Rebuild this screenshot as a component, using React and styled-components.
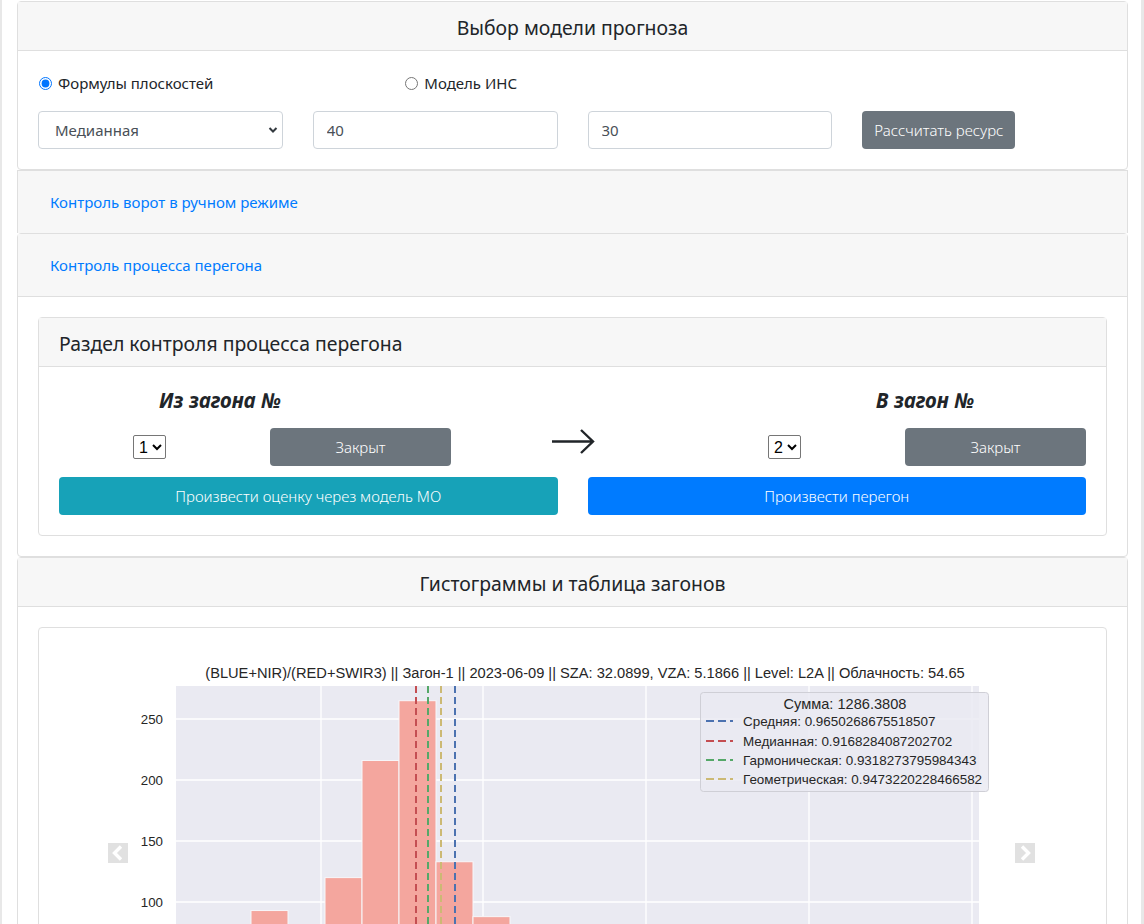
import React from 'react';
import styled, { createGlobalStyle } from 'styled-components';

const GlobalStyle = createGlobalStyle`
  * { box-sizing: border-box; }
  html, body {
    margin: 0;
    padding: 0;
    background: #fff;
    overflow: hidden;
  }
  body {
    font-family: "Noto Sans", "Open Sans", sans-serif;
    font-size: 15px;
    color: #212529;
  }
`;

/* Styled Components */
const Page = styled.div`
  width: 1144px;
  min-height: 924px;
  border-left: 2px solid #e8e8e8;
  border-right: 3px solid #e8e8e8;
  padding: 1px 13px 0 15px;
`;

const Card = styled.div`
  border: 1px solid #dfdfdf;
  border-bottom: ${(p) => (p.$collapsed ? 'none' : '1px solid #dfdfdf')};
  border-radius: ${(p) => (p.$collapsed ? '0' : '4px')};
  background: #fff;
`;

const CardHeader = styled.div`
  background: #f7f7f7;
  padding: 12px 20px;
  border-bottom: ${(p) => (p.$noLine ? 'none' : '1px solid #dfdfdf')};
  text-align: ${(p) => (p.$center ? 'center' : 'left')};
`;

const HeaderTitle = styled.h5`
  margin: 0 0 -2px;
  padding-top: 2px;
  font-size: 19.4px;
  font-weight: 400;
  line-height: 24px;
`;

const LinkButton = styled.button`
  font-family: inherit;
  font-size: 15px;
  color: #007bff;
  background: none;
  border: none;
  padding: 0 12px;
  height: 38px;
  line-height: 38px;
  cursor: pointer;
`;

const CardBody = styled.div`
  padding: 20px;
`;

const RadioRow = styled.div`
  display: grid;
  grid-template-columns: repeat(3, 1fr);
  column-gap: 30px;
  height: 24px;
  margin-bottom: 16px;
`;

const RadioLabel = styled.label`
  display: flex;
  align-items: center;
  font-size: 15px;
  line-height: 24px;

  input {
    width: 13px;
    height: 13px;
    margin: 0 6px 0 1px;
    accent-color: #0075ff;
  }
`;

const FormRow = styled.div`
  display: grid;
  grid-template-columns: repeat(4, 1fr);
  column-gap: 30px;
  align-items: center;
`;

const SelectWrap = styled.div`
  position: relative;

  svg {
    position: absolute;
    right: 5px;
    top: 15px;
    pointer-events: none;
  }
`;

const Select = styled.select`
  appearance: none;
  width: 100%;
  height: 38px;
  padding: 0 28px 0 16px;
  font-family: inherit;
  font-size: 15px;
  color: #495057;
  background: #fff;
  border: 1px solid #ced4da;
  border-radius: 4px;
`;

const Input = styled.input`
  width: 100%;
  height: 38px;
  padding: 0 13px;
  font-family: inherit;
  font-size: 15px;
  color: #495057;
  border: 1px solid #ced4da;
  border-radius: 4px;
`;

const Button = styled.button`
  height: 38px;
  padding: 0 12px;
  font-family: inherit;
  font-size: 15px;
  font-weight: 300;
  color: #fff;
  background: ${(p) => p.$bg || '#6c757d'};
  border: none;
  border-radius: 4px;
  cursor: pointer;
  width: ${(p) => (p.$block ? '100%' : 'auto')};
  justify-self: start;
`;

const InnerCard = styled.div`
  border: 1px solid #dfdfdf;
  border-radius: 4px;
`;

const TransferGrid = styled.div`
  display: grid;
  grid-template-columns: 1fr 30px 1fr;
`;

const PenTitle = styled.div`
  grid-column: ${(p) => (p.$right ? 3 : 1)};
  width: 322px;
  justify-self: ${(p) => (p.$right ? 'end' : 'start')};
  text-align: center;
  font-size: 20.5px;
  font-weight: 700;
  font-style: italic;
  line-height: 26px;
`;

const Controls = styled.div`
  grid-column: ${(p) => (p.$right ? 3 : 1)};
  justify-self: ${(p) => (p.$right ? 'end' : 'start')};
  display: grid;
  grid-template-columns: 181px 181px;
  column-gap: 30px;
  align-items: center;
  justify-items: center;
  margin-top: 15px;

  ${Button} {
    width: 100%;
  }
`;

const PenSelect = styled.select`
  height: 24px;
  font-family: "Liberation Sans", Arial, sans-serif;
  font-size: 16px;
  color: #000;
  border: 1px solid #767676;
  border-radius: 2px;
  background: #fff;
  padding: 0 1px;
`;

const ArrowCell = styled.div`
  grid-column: 2;
  justify-self: center;
  align-self: start;
  margin-top: 15px;
  width: 44px;
  display: flex;
  justify-content: center;
`;

const WideCell = styled.div`
  grid-column: ${(p) => (p.$right ? 3 : 1)};
  margin-top: 11px;
`;

const Carousel = styled.div`
  position: relative;
  height: 300px;
  overflow: hidden;
`;

const CarouselControl = styled.span`
  position: absolute;
  top: 195px;
  left: ${(p) => (p.$next ? '956px' : '49px')};
  width: 20px;
  height: 20px;
  display: block;
`;

const ChevronDown = () => (
  <svg width="10" height="8" viewBox="0 0 10 8">
    <path d="M1.5 2 L5 5.5 L8.5 2" fill="none" stroke="#343a40" strokeWidth="2" />
  </svg>
);

const Arrow = () => (
  <svg width="44" height="28" viewBox="0 0 44 28">
    <path d="M1 13.5 H42 M30 2 L42 13.5 L30 25" fill="none" stroke="#212529" strokeWidth="2.4" />
  </svg>
);

const CarouselIcon = ({ next }) => (
  <svg width="20" height="20" viewBox="0 0 20 20">
    <rect width="20" height="20" fill="#e1e1e1" />
    <path
      d={next ? 'M7 3.5 L13.5 10 L7 16.5' : 'M13 3.5 L6.5 10 L13 16.5'}
      fill="none"
      stroke="#fff"
      strokeWidth="3.4"
    />
  </svg>
);

const bars = [
  { x: 214, v: 40 },
  { x: 251, v: 93 },
  { x: 288, v: 55 },
  { x: 325, v: 120 },
  { x: 362, v: 216 },
  { x: 399, v: 265 },
  { x: 436, v: 133 },
  { x: 473, v: 88 },
  { x: 510, v: 42 },
  { x: 547, v: 20 },
];

const means = [
  { x: 416, color: '#c44e52' },
  { x: 428, color: '#55a868' },
  { x: 441, color: '#ccb974' },
  { x: 455, color: '#4c72b0' },
];

const legend = [
  { label: 'Средняя: 0.9650268675518507', color: '#4c72b0', y: 721 },
  { label: 'Медианная: 0.9168284087202702', color: '#c44e52', y: 741 },
  { label: 'Гармоническая: 0.9318273795984343', color: '#55a868', y: 760 },
  { label: 'Геометрическая: 0.9473220228466582', color: '#ccb974', y: 779 },
];

const yOf = (v) => 1024 - v * 1.22;

const Histogram = () => (
  <svg width="1026" height="300" viewBox="59 648 1026 300" fontFamily="'Liberation Sans', Arial, sans-serif">
    <text x="585" y="678" textAnchor="middle" fontSize="14.65" fill="#262626">
      (BLUE+NIR)/(RED+SWIR3) || Загон-1 || 2023-06-09 || SZA: 32.0899, VZA: 5.1866 || Level: L2A || Облачность: 54.65
    </text>
    <rect x="176" y="686" width="803" height="300" fill="#eaeaf2" />
    {[719, 780, 841, 902].map((y) => (
      <line key={y} x1="176" x2="979" y1={y} y2={y} stroke="#fff" strokeWidth="1.3" />
    ))}
    {[321, 483, 646, 809, 972].map((x) => (
      <line key={x} x1={x} x2={x} y1="686" y2="986" stroke="#fff" strokeWidth="1.3" />
    ))}
    {[250, 200, 150, 100].map((v) => (
      <text key={v} x="163" y={yOf(v) + 5} textAnchor="end" fontSize="13.3" fill="#262626">
        {v}
      </text>
    ))}
    {bars.map((b) => (
      <rect
        key={b.x}
        x={b.x}
        y={yOf(b.v)}
        width="37"
        height={1024 - yOf(b.v)}
        fill="#f4a69e"
        stroke="#f7f7fa"
        strokeWidth="1"
      />
    ))}
    {means.map((m) => (
      <line
        key={m.x}
        x1={m.x}
        x2={m.x}
        y1="686"
        y2="986"
        stroke={m.color}
        strokeWidth="2"
        strokeDasharray="7 4"
      />
    ))}
    <rect x="700.5" y="692.5" width="288" height="99" rx="3" fill="#eaeaf2" fillOpacity="0.85" stroke="#cfcfd6" />
    <text x="845" y="708.5" textAnchor="middle" fontSize="14.6" fill="#262626">
      Сумма: 1286.3808
    </text>
    {legend.map((l) => (
      <g key={l.label}>
        <line x1="706" x2="733" y1={l.y} y2={l.y} stroke={l.color} strokeWidth="2" strokeDasharray="8 4" />
        <text x="743" y={l.y + 4.5} fontSize="13.45" fill="#262626">
          {l.label}
        </text>
      </g>
    ))}
  </svg>
);

const App = () => {
  return (
    <>
      <GlobalStyle />
      <Page>
        <Card>
          <CardHeader $center>
            <HeaderTitle>Выбор модели прогноза</HeaderTitle>
          </CardHeader>
          <CardBody>
            <RadioRow>
              <RadioLabel>
                <input type="radio" name="model" defaultChecked />
                Формулы плоскостей
              </RadioLabel>
              <RadioLabel>
                <input type="radio" name="model" />
                Модель ИНС
              </RadioLabel>
            </RadioRow>
            <FormRow>
              <SelectWrap>
                <Select defaultValue="median">
                  <option value="median">Медианная</option>
                  <option value="mean">Средняя</option>
                  <option value="harm">Гармоническая</option>
                  <option value="geom">Геометрическая</option>
                </Select>
                <ChevronDown />
              </SelectWrap>
              <Input defaultValue="40" />
              <Input defaultValue="30" />
              <Button>Рассчитать ресурс</Button>
            </FormRow>
          </CardBody>
        </Card>

        <Card $collapsed>
          <CardHeader $noLine>
            <LinkButton>Контроль ворот в ручном режиме</LinkButton>
          </CardHeader>
        </Card>

        <Card>
          <CardHeader>
            <LinkButton>Контроль процесса перегона</LinkButton>
          </CardHeader>
          <CardBody>
            <InnerCard>
              <CardHeader>
                <HeaderTitle>Раздел контроля процесса перегона</HeaderTitle>
              </CardHeader>
              <CardBody>
                <TransferGrid>
                  <PenTitle>Из загона №</PenTitle>
                  <PenTitle $right>В загон №</PenTitle>
                  <Controls>
                    <PenSelect defaultValue="1">
                      <option>1</option>
                      <option>2</option>
                      <option>3</option>
                    </PenSelect>
                    <Button>Закрыт</Button>
                  </Controls>
                  <ArrowCell>
                    <Arrow />
                  </ArrowCell>
                  <Controls $right>
                    <PenSelect defaultValue="2">
                      <option>1</option>
                      <option>2</option>
                      <option>3</option>
                    </PenSelect>
                    <Button>Закрыт</Button>
                  </Controls>
                  <WideCell>
                    <Button $block $bg="#17a2b8">Произвести оценку через модель МО</Button>
                  </WideCell>
                  <WideCell $right>
                    <Button $block $bg="#007bff">Произвести перегон</Button>
                  </WideCell>
                </TransferGrid>
              </CardBody>
            </InnerCard>
          </CardBody>
        </Card>

        <Card>
          <CardHeader $center>
            <HeaderTitle>Гистограммы и таблица загонов</HeaderTitle>
          </CardHeader>
          <CardBody>
            <InnerCard>
              <CardBody>
                <Carousel>
                  <Histogram />
                  <CarouselControl>
                    <CarouselIcon />
                  </CarouselControl>
                  <CarouselControl $next>
                    <CarouselIcon next />
                  </CarouselControl>
                </Carousel>
              </CardBody>
            </InnerCard>
          </CardBody>
        </Card>
      </Page>
    </>
  );
};

export default App;
